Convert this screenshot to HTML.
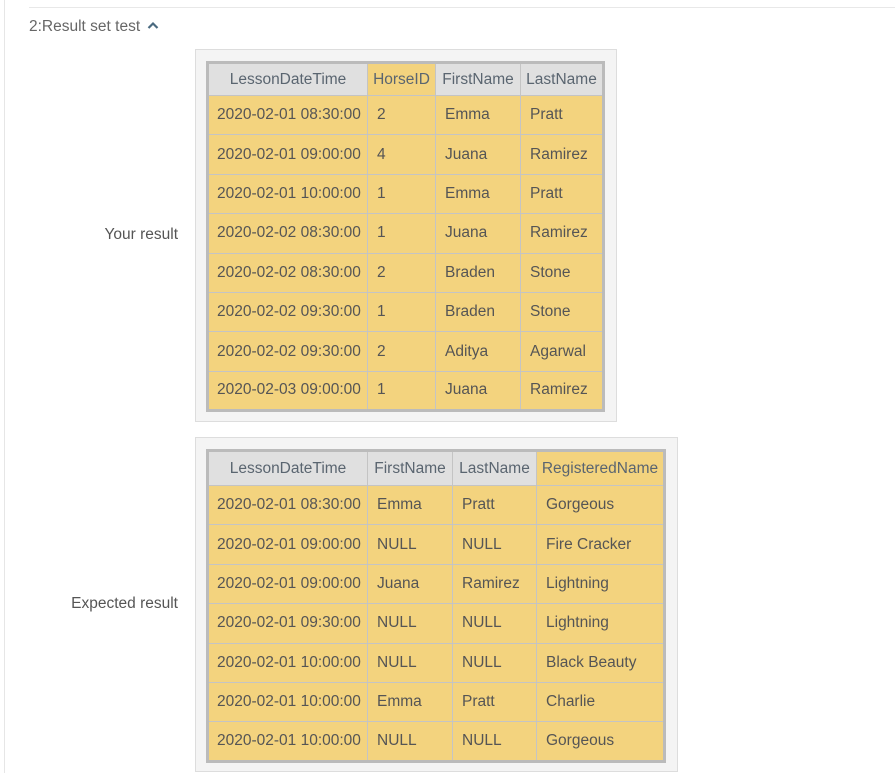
<!DOCTYPE html>
<html><head><style>
body{margin:0;width:895px;height:773px;background:#fff;position:relative;overflow:hidden;font-family:"Liberation Sans",sans-serif;color:#555;}
.vl{position:absolute;left:4px;top:0;width:1px;height:773px;background:#e6e6e6}
.hl{position:absolute;left:29px;top:7px;right:0;height:1px;background:#e8e8e8}
.title{position:absolute;left:29px;top:18px;font-size:15.5px;color:#666}
.lbl{position:absolute;font-size:15.5px;color:#555;text-align:right;width:178px;left:0}
.box{position:absolute;background:#f4f4f4;border:1px solid #ddd;box-sizing:border-box}
table{position:absolute;border-collapse:collapse;table-layout:fixed;border:3px solid #bbb;font-size:15.5px}
td,th{border:1px solid #c4c4c4;background:#f3d37e;padding:0 0 0 9px;text-align:left;font-weight:normal;white-space:nowrap;overflow:hidden;color:#555}
th{background:#e0e0e0;text-align:center;padding:0;color:#5a6570}
th.y{background:#f3d37e}
td:first-child{padding-left:8px}
</style></head><body>
<div class="vl"></div><div class="hl"></div>
<div class="title">2:Result set test <svg width="12" height="10" viewBox="0 0 12 10" style="margin-left:3px;vertical-align:1px"><path d="M1.5 8 L6 3.5 L10.5 8" stroke="#4a6a80" stroke-width="2.2" fill="none"/></svg></div>
<div class="lbl" style="top:226px">Your result</div>
<div class="lbl" style="top:595px">Expected result</div>
<div class="box" style="left:195px;top:49px;width:422px;height:373px"></div>
<table style="left:206px;top:61px;width:396px">
<colgroup><col style="width:160px"><col style="width:68px"><col style="width:85px"><col style="width:83px"></colgroup>
<tr style="height:33px"><th>LessonDateTime</th><th class="y">HorseID</th><th>FirstName</th><th>LastName</th></tr>
<tr style="height:39.4px"><td>2020-02-01 08:30:00</td><td>2</td><td>Emma</td><td>Pratt</td></tr>
<tr style="height:39.4px"><td>2020-02-01 09:00:00</td><td>4</td><td>Juana</td><td>Ramirez</td></tr>
<tr style="height:39.4px"><td>2020-02-01 10:00:00</td><td>1</td><td>Emma</td><td>Pratt</td></tr>
<tr style="height:39.4px"><td>2020-02-02 08:30:00</td><td>1</td><td>Juana</td><td>Ramirez</td></tr>
<tr style="height:39.4px"><td>2020-02-02 08:30:00</td><td>2</td><td>Braden</td><td>Stone</td></tr>
<tr style="height:39.4px"><td>2020-02-02 09:30:00</td><td>1</td><td>Braden</td><td>Stone</td></tr>
<tr style="height:39.4px"><td>2020-02-02 09:30:00</td><td>2</td><td>Aditya</td><td>Agarwal</td></tr>
<tr style="height:39.4px"><td>2020-02-03 09:00:00</td><td>1</td><td>Juana</td><td>Ramirez</td></tr>
</table>
<div class="box" style="left:195px;top:437px;width:483px;height:335px"></div>
<table style="left:206px;top:449px;width:457px">
<colgroup><col style="width:160px"><col style="width:85px"><col style="width:84px"><col style="width:128px"></colgroup>
<tr style="height:35px"><th>LessonDateTime</th><th>FirstName</th><th>LastName</th><th class="y">RegisteredName</th></tr>
<tr style="height:39.4px"><td>2020-02-01 08:30:00</td><td>Emma</td><td>Pratt</td><td>Gorgeous</td></tr>
<tr style="height:39.4px"><td>2020-02-01 09:00:00</td><td>NULL</td><td>NULL</td><td>Fire Cracker</td></tr>
<tr style="height:39.4px"><td>2020-02-01 09:00:00</td><td>Juana</td><td>Ramirez</td><td>Lightning</td></tr>
<tr style="height:39.4px"><td>2020-02-01 09:30:00</td><td>NULL</td><td>NULL</td><td>Lightning</td></tr>
<tr style="height:39.4px"><td>2020-02-01 10:00:00</td><td>NULL</td><td>NULL</td><td>Black Beauty</td></tr>
<tr style="height:39.4px"><td>2020-02-01 10:00:00</td><td>Emma</td><td>Pratt</td><td>Charlie</td></tr>
<tr style="height:39.4px"><td>2020-02-01 10:00:00</td><td>NULL</td><td>NULL</td><td>Gorgeous</td></tr>
</table>
</body></html>
